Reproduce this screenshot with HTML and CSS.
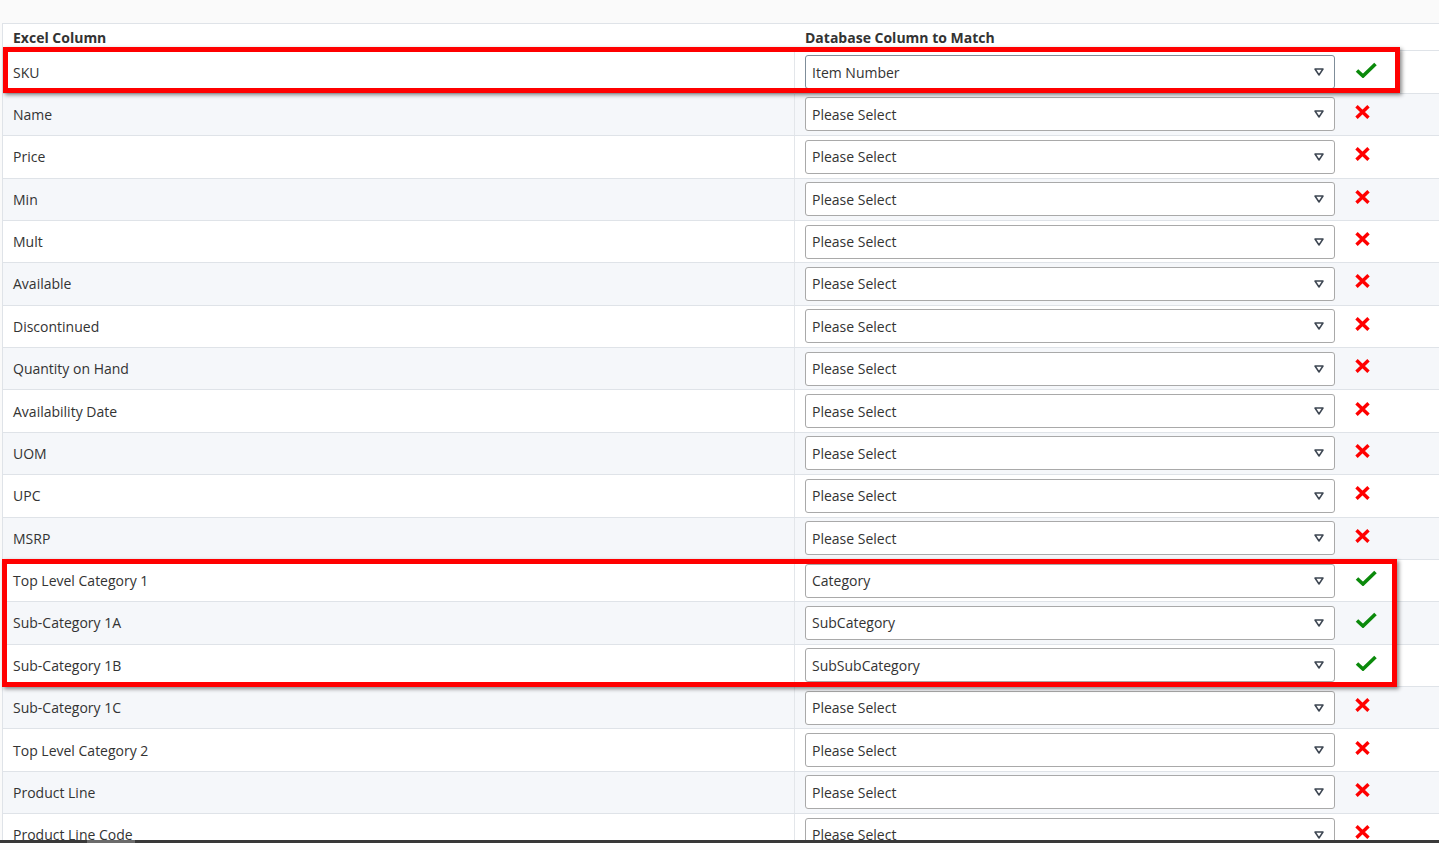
FILE: index.html
```html
<!DOCTYPE html>
<html lang="en">
<head>
  <meta charset="UTF-8">
  <title>Column Mapping</title>
  <link rel="stylesheet" href="styles.css">
</head>
<body>
  <div class="page">
    <div class="mapping">
      <div class="row head">
        <div class="col-excel">Excel Column</div>
        <div class="col-match">Database Column to Match</div>
      </div>

      <div class="row">
        <div class="col-excel">SKU</div>
        <div class="col-match">
          <div class="select focused">Item Number<span class="caret"></span></div>
          <span class="status ok"></span>
        </div>
      </div>
      <div class="row"><div class="col-excel">Name</div><div class="col-match"><div class="select">Please Select<span class="caret"></span></div><span class="status no"></span></div></div>
      <div class="row"><div class="col-excel">Price</div><div class="col-match"><div class="select">Please Select<span class="caret"></span></div><span class="status no"></span></div></div>
      <div class="row"><div class="col-excel">Min</div><div class="col-match"><div class="select">Please Select<span class="caret"></span></div><span class="status no"></span></div></div>
      <div class="row"><div class="col-excel">Mult</div><div class="col-match"><div class="select">Please Select<span class="caret"></span></div><span class="status no"></span></div></div>
      <div class="row"><div class="col-excel">Available</div><div class="col-match"><div class="select">Please Select<span class="caret"></span></div><span class="status no"></span></div></div>
      <div class="row"><div class="col-excel">Discontinued</div><div class="col-match"><div class="select">Please Select<span class="caret"></span></div><span class="status no"></span></div></div>
      <div class="row"><div class="col-excel">Quantity on Hand</div><div class="col-match"><div class="select">Please Select<span class="caret"></span></div><span class="status no"></span></div></div>
      <div class="row"><div class="col-excel">Availability Date</div><div class="col-match"><div class="select">Please Select<span class="caret"></span></div><span class="status no"></span></div></div>
      <div class="row"><div class="col-excel">UOM</div><div class="col-match"><div class="select">Please Select<span class="caret"></span></div><span class="status no"></span></div></div>
      <div class="row"><div class="col-excel">UPC</div><div class="col-match"><div class="select">Please Select<span class="caret"></span></div><span class="status no"></span></div></div>
      <div class="row"><div class="col-excel">MSRP</div><div class="col-match"><div class="select">Please Select<span class="caret"></span></div><span class="status no"></span></div></div>
      <div class="row"><div class="col-excel">Top Level Category 1</div><div class="col-match"><div class="select">Category<span class="caret"></span></div><span class="status ok"></span></div></div>
      <div class="row"><div class="col-excel">Sub-Category 1A</div><div class="col-match"><div class="select">SubCategory<span class="caret"></span></div><span class="status ok"></span></div></div>
      <div class="row"><div class="col-excel">Sub-Category 1B</div><div class="col-match"><div class="select">SubSubCategory<span class="caret"></span></div><span class="status ok"></span></div></div>
      <div class="row"><div class="col-excel">Sub-Category 1C</div><div class="col-match"><div class="select">Please Select<span class="caret"></span></div><span class="status no"></span></div></div>
      <div class="row"><div class="col-excel">Top Level Category 2</div><div class="col-match"><div class="select">Please Select<span class="caret"></span></div><span class="status no"></span></div></div>
      <div class="row"><div class="col-excel">Product Line</div><div class="col-match"><div class="select">Please Select<span class="caret"></span></div><span class="status no"></span></div></div>
      <div class="row"><div class="col-excel">Product Line Code</div><div class="col-match"><div class="select">Please Select<span class="caret"></span></div><span class="status no"></span></div></div>

      <!-- annotation boxes -->
      <div class="mark mark-sku"></div>
      <div class="mark mark-cat"></div>
    </div>
  </div>
  <div class="taskbar"><span class="task-item"></span></div>

  <svg width="0" height="0" class="defs">
    <symbol id="i-ok" viewBox="0 0 22 16">
      <path d="M2 8.5 L8 14 L20.5 2" fill="none" stroke="#0b8a0b" stroke-width="3.6" stroke-linejoin="miter"/>
    </symbol>
    <symbol id="i-no" viewBox="0 0 15 14">
      <path d="M1.5 1.2 L13.5 12.8 M13.5 1.2 L1.5 12.8" fill="none" stroke="#ff0000" stroke-width="3.4"/>
    </symbol>
    <symbol id="i-caret" viewBox="0 0 10 8">
      <path d="M1 1 L9 1 L5 7 Z" fill="none" stroke="#3d4652" stroke-width="1.5" stroke-linejoin="round"/>
    </symbol>
  </svg>

  <script>
    // fill icons from symbols
    document.querySelectorAll(".status.ok").forEach(function (el) {
      el.innerHTML = '<svg width="22" height="16"><use href="#i-ok"/></svg>';
    });
    document.querySelectorAll(".status.no").forEach(function (el) {
      el.innerHTML = '<svg width="15" height="14"><use href="#i-no"/></svg>';
    });
    document.querySelectorAll(".caret").forEach(function (el) {
      el.innerHTML = '<svg width="10" height="8"><use href="#i-caret"/></svg>';
    });
  </script>
</body>
</html>
```

FILE: styles.css
```css
/* base */
body {
  margin: 0;
  font-family: "Open Sans", "Liberation Sans", Arial, sans-serif;
  font-size: 14px;
  color: #333;
  background-color: #fafafa;
  height: 843px;
  overflow: hidden;
}
.page {
  padding: 23px 0 0 2px;
}
.defs {
  position: absolute;
}

/* mapping table */
.mapping {
  position: relative;
  background-color: #fff;
  border-top: 1px solid #dfe3e8;
  border-left: 1px solid #dfe3e8;
}
.row {
  display: flex;
  height: 42.38px;
  box-sizing: border-box;
  border-bottom: 1px solid #dfe3e8;
}
.row:nth-child(odd) {
  background-color: #f5f7fa;
}
.row.head {
  height: 27.4px;
  background-color: #fff;
  font-weight: 700;
  align-items: flex-end;
}
.row.head .col-excel,
.row.head .col-match {
  border-right: none;
  padding-bottom: 3px;
  align-items: flex-end;
}
.col-excel {
  width: 792px;
  flex: none;
  box-sizing: border-box;
  padding-left: 10px;
  display: flex;
  align-items: center;
  border-right: 1px solid #e3e6ea;
}
.row.head .col-excel {
  border-right: none;
}
.col-match {
  flex: 1;
  display: flex;
  align-items: center;
  padding-left: 10px;
}

/* select box */
.select {
  width: 530px;
  height: 34px;
  box-sizing: border-box;
  border: 1px solid #a9a9a9;
  border-radius: 3px;
  background-color: #fff;
  padding: 0 6px;
  display: flex;
  align-items: center;
  justify-content: space-between;
}
.select.focused {
  border-color: #7f8d99;
}
.caret {
  display: flex;
  margin-right: 4px;
}

/* status icons */
.status {
  display: flex;
  margin-left: 20px;
  margin-top: -5px;
}

/* red annotation boxes */
.mark {
  position: absolute;
  border: 5px solid #ff0000;
  box-shadow: 2px 2px 4px rgba(0, 0, 0, 0.45);
  pointer-events: none;
}
.mark-sku {
  left: 0;
  top: 23px;
  width: 1387px;
  height: 36px;
}
.mark-cat {
  left: -1px;
  top: 535px;
  width: 1385px;
  height: 118px;
}

/* bottom bar */
.taskbar {
  position: fixed;
  left: 0;
  right: 0;
  bottom: 0;
  height: 3px;
  background-color: #3a3a3a;
}
.task-item {
  display: block;
  margin-left: 87px;
  width: 48px;
  height: 3px;
  background-color: #6b6b6b;
}
```
